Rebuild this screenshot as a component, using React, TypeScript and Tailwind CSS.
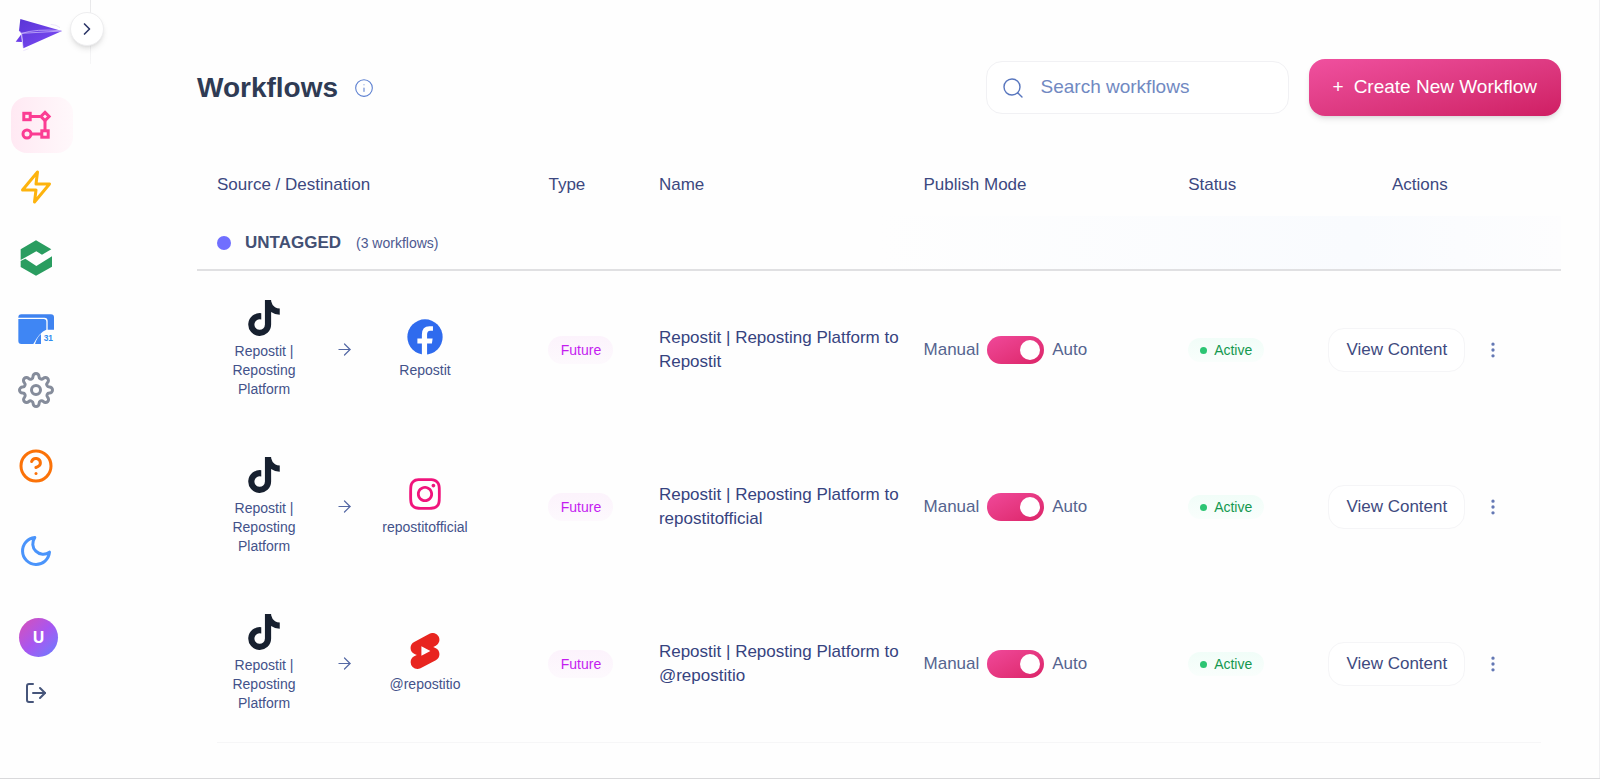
import type { ReactNode } from "react";
import { ArrowRight, ChevronRight, EllipsisVertical, Info, Search } from "lucide-react";
import { FaInstagram, FaTiktok } from "react-icons/fa6";
import { FiHelpCircle, FiLogOut, FiMoon, FiSettings, FiZap } from "react-icons/fi";
import { SiYoutubeshorts } from "react-icons/si";

function PlaneLogo() {
  return (
    <svg viewBox="45 54 144 102" className="h-[34px] w-12" aria-hidden="true">
      <defs>
        <linearGradient id="plane" x1="0" y1="0" x2="1" y2="1">
          <stop offset="0" stopColor="#5a35d6" />
          <stop offset="1" stopColor="#7d4bf6" />
        </linearGradient>
      </defs>
      <path d="M61 57 L186 93 L70 145 L65 101 L57 92 Z" fill="url(#plane)" />
      <path d="M64 103 L47 125 L66 126 Z" fill="#6a3ce8" />
      <path d="M57 92 L65 100 L186 93 M65 100 L69 143 M65 100 Q110 86 180 92" fill="none" stroke="#d9c8ff" strokeWidth="2" />
      <path d="M152 73 L168 76 L180 83 M70 152 L86 146" fill="none" stroke="#e3d9fb" strokeWidth="2" />
    </svg>
  );
}

function FlowIcon() {
  return (
    <svg viewBox="0 0 36 36" className="size-9" fill="none" stroke="#fb3d93" strokeWidth="3" aria-hidden="true">
      <rect x="5.8" y="6.3" width="6.4" height="6.4" />
      <path d="M13 9.5H22M27 14V23M23 27H13" />
      <path d="M27 5.4L31.1 9.5L27 13.6L22.9 9.5Z" />
      <rect x="23.8" y="23.8" width="6.4" height="6.4" />
      <circle cx="9" cy="27" r="4" />
    </svg>
  );
}

function HexIcon() {
  return (
    <svg viewBox="53 60 108 108" className="size-9" fill="#2a9d60" aria-hidden="true">
      <path d="M61 88L107 61L153 88L125 104L108 94L61 120Z" />
      <path d="M61 123L75 116L108 138L155 109V140L107 167L61 141Z" />
    </svg>
  );
}

function CalendarIcon() {
  return (
    <svg viewBox="53 279 108 96" className="h-8 w-9" aria-hidden="true">
      <path d="M54 293V292Q54 283 63 283H152Q161 283 161 292V329H142V303Q142 293 132 293Z" fill="#3f83f0" />
      <path d="M54 297H130Q138 297 138 305V329Q118 336 99 372H63Q54 372 54 363Z" fill="#3f86f4" />
      <path d="M104 372Q110 352 122 342V372Z" fill="#3f86f4" />
      <text x="130" y="363" fontSize="25" fontWeight="700" fill="#2f8bef" fontFamily="Liberation Sans, sans-serif">31</text>
    </svg>
  );
}

function FacebookIcon() {
  return (
    <svg viewBox="654 116 104 104" className="size-9" aria-hidden="true">
      <circle cx="706" cy="168" r="51" fill="#2f6bee" />
      <path
        d="M697 221V187H684V172H697V161Q697 137 719 137H729V150H721Q712 150 712 161V172H728L726 187H712V221Z"
        fill="#fff"
      />
    </svg>
  );
}

type NavItemProps = { label: string; className: string; children: ReactNode };

function NavItem({ label, className, children }: NavItemProps) {
  return (
    <a
      href="#"
      aria-label={label}
      className={`flex h-14 w-[62px] items-center rounded-2xl pl-[7px] ${className}`}
    >
      {children}
    </a>
  );
}

function Sidebar() {
  return (
    <aside className="relative w-[91px] shrink-0">
      <span className="absolute top-0 right-0 h-16 w-px bg-linear-to-b from-[#e8e8ea] to-[#f6f6f7]" />
      <button
        type="button"
        aria-label="Expand sidebar"
        className="absolute top-3 left-[70px] flex size-[34px] items-center justify-center rounded-full border border-[#eeeef0] bg-white text-[#2d3768] shadow-md"
      >
        <ChevronRight size={20} />
      </button>
      <div className="h-[97px] pt-[18px] pl-[15px]">
        <PlaneLogo />
      </div>
      <nav className="flex flex-col pl-[11px]">
        <NavItem label="Workflows" className="bg-linear-to-r from-[#ffe9f3] to-[#fff8fb]">
          <FlowIcon />
        </NavItem>
        <NavItem label="Automations" className="mt-1.5 text-[#fdb30e]">
          <FiZap size={36} />
        </NavItem>
        <NavItem label="Integrations" className="mt-[15px]">
          <HexIcon />
        </NavItem>
        <NavItem label="Calendar" className="mt-[15px]">
          <CalendarIcon />
        </NavItem>
        <NavItem label="Settings" className="mt-[5px] text-[#858c9b]">
          <FiSettings size={36} />
        </NavItem>
        <NavItem label="Help" className="mt-5 text-[#fb7208]">
          <FiHelpCircle size={36} />
        </NavItem>
        <NavItem label="Dark mode" className="mt-[29px] text-[#4a94fb]">
          <FiMoon size={36} />
        </NavItem>
        <NavItem label="Account" className="mt-[30px]">
          <span className="ml-px flex size-[39px] items-center justify-center rounded-full bg-linear-to-br from-[#d94bb4] via-[#a855f0] to-[#5f7cff] font-['Open_Sans',sans-serif] text-base font-bold text-white">
            U
          </span>
        </NavItem>
        <NavItem label="Log out" className="text-[#46557a]">
          <FiLogOut size={24} className="ml-1.5" />
        </NavItem>
      </nav>
    </aside>
  );
}

const workflows = [
  { name: "Repostit", icon: <FacebookIcon /> },
  { name: "repostitofficial", icon: <FaInstagram size={36} className="text-[#f0147c]" /> },
  { name: "@repostitio", icon: <SiYoutubeshorts size={36} className="text-[#e8251f]" /> },
];

function Account({ name, icon }: { name: string; icon: ReactNode }) {
  return (
    <div className="flex w-[94px] flex-col items-center gap-1.5 text-center text-sm leading-[19px] text-[#43528a]">
      {icon}
      <span>{name}</span>
    </div>
  );
}

function WorkflowRow({ name, icon }: { name: string; icon: ReactNode }) {
  return (
    <tr className="h-[157px]">
      <td className="pl-5">
        <div className="flex items-center gap-6">
          <Account name="Repostit | Reposting Platform" icon={<FaTiktok size={36} className="text-[#17202f]" />} />
          <ArrowRight size={19} strokeWidth={1.5} className="text-[#5468a4]" />
          <Account name={name} icon={icon} />
        </div>
      </td>
      <td className="pl-5">
        <span className="inline-flex h-7 w-[65px] items-center justify-center rounded-full bg-linear-to-b from-[#fcf3fc] to-[#fdf9fd] text-sm text-[#c41df0]">
          Future
        </span>
      </td>
      <td className="pl-5 text-[17px] leading-6 text-[#36437f]">{`Repostit | Reposting Platform to ${name}`}</td>
      <td className="pl-5">
        <label className="flex items-center gap-2 text-[17px] text-[#55648f]">
          Manual
          <input
            type="checkbox"
            role="switch"
            defaultChecked
            aria-label={`Publish ${name} automatically`}
            className="flex h-7 w-[57px] appearance-none items-center justify-start rounded-full bg-linear-to-br from-[#f0489a] to-[#dc2368] px-1 before:size-5 before:rounded-full before:bg-white checked:justify-end"
          />
          Auto
        </label>
      </td>
      <td className="pl-5">
        <span className="inline-flex h-6 items-center gap-[7px] rounded-full bg-linear-to-b from-[#f1fdf8] to-[#f9fefc] px-3 text-sm text-[#14984f]">
          <span className="size-[7px] rounded-full bg-[#2cc573]" />
          Active
        </span>
      </td>
      <td className="pr-2">
        <div className="flex items-center justify-center gap-[18px]">
          <button
            type="button"
            className="h-11 rounded-2xl border border-[#f5f5f7] bg-white px-[17px] text-[17px] whitespace-nowrap text-[#3e4a80]"
          >
            View Content
          </button>
          <button type="button" aria-label={`More actions for ${name}`} className="text-[#6478b4]">
            <EllipsisVertical size={20} />
          </button>
        </div>
      </td>
    </tr>
  );
}

export default function App() {
  return (
    <div className="border-b border-[#d9d9db] bg-[#fefefe] font-['Liberation_Sans',Arial,sans-serif]">
      <div className="flex border-r border-[#f0f0f2]">
        <Sidebar />
        <main className="min-w-0 flex-1 pt-[59px] pr-[38px] pb-[35px] pl-[106px]">
          <header className="flex items-center justify-between">
            <div className="flex items-center gap-4">
              <h1 className="text-[28px] leading-8 font-bold text-[#2f3b54]">Workflows</h1>
              <button type="button" aria-label="About workflows" className="text-[#5b7fd0]">
                <Info size={20} strokeWidth={1.3} />
              </button>
            </div>
            <div className="flex items-center gap-5">
              <label className="flex h-[53px] w-[303px] items-center gap-4 rounded-2xl border border-[#f1f1f4] bg-white px-3.5 text-[#5876be]">
                <Search size={24} strokeWidth={1.4} className="shrink-0" />
                <input
                  type="search"
                  aria-label="Search workflows"
                  placeholder="Search workflows"
                  className="w-full min-w-0 bg-transparent text-[19px] outline-none placeholder:text-[#7189c2]"
                />
              </label>
              <button
                type="button"
                className="flex h-[57px] items-center gap-2.5 rounded-2xl bg-linear-to-br from-[#f0509f] via-[#de3a82] to-[#cf1d63] px-6 text-[19px] whitespace-nowrap text-white shadow-md"
              >
                <span>+</span>
                <span>Create New Workflow</span>
              </button>
            </div>
          </header>
          <table className="mt-[38px] w-full table-fixed border-separate border-spacing-0 text-left">
            <colgroup>
              <col className="w-[24.3%]" />
              <col className="w-[8.1%]" />
              <col className="w-[19.4%]" />
              <col className="w-[19.4%]" />
              <col className="w-[8.1%]" />
              <col />
            </colgroup>
            <thead>
              <tr className="h-[62px] text-[17px] text-[#3c4880]">
                <th className="pl-5 font-normal">Source / Destination</th>
                <th className="pl-5 font-normal">Type</th>
                <th className="pl-5 font-normal">Name</th>
                <th className="pl-5 font-normal">Publish Mode</th>
                <th className="pl-5 font-normal">Status</th>
                <th className="text-center font-normal">Actions</th>
              </tr>
            </thead>
            <tbody>
              <tr className="h-[55px]">
                <th
                  colSpan={6}
                  scope="colgroup"
                  className="border-b-2 border-[#e0e0e2] bg-linear-to-r from-[#fefefe] from-50% via-[#f9fbfe] via-85% to-[#fdfdfe] px-5 font-normal"
                >
                  <div className="flex items-center">
                    <span className="size-3.5 rounded-full bg-[#706fff]" />
                    <span className="ml-3.5 text-[17px] font-bold text-[#435074]">UNTAGGED</span>
                    <span className="ml-[15px] text-sm text-[#4d5990]">(3 workflows)</span>
                  </div>
                </th>
              </tr>
              {workflows.map((w) => (
                <WorkflowRow key={w.name} name={w.name} icon={w.icon} />
              ))}
            </tbody>
          </table>
          <hr className="mx-5 border-[#f6f6f7]" />
        </main>
      </div>
    </div>
  );
}
